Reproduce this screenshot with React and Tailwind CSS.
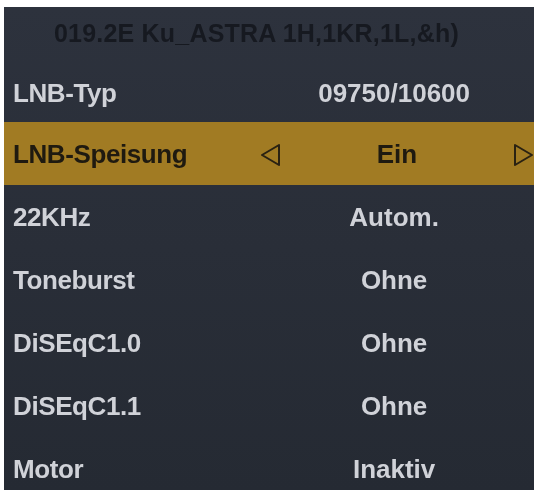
import React from 'react'

const rows = [
  { label: 'LNB-Typ', value: '09750/10600' },
  { label: 'LNB-Speisung', value: 'Ein', active: true },
  { label: '22KHz', value: 'Autom.' },
  { label: 'Toneburst', value: 'Ohne' },
  { label: 'DiSEqC1.0', value: 'Ohne' },
  { label: 'DiSEqC1.1', value: 'Ohne' },
  { label: 'Motor', value: 'Inaktiv' },
]

function Arrow({ dir }) {
  return (
    <svg width="21" height="24" viewBox="0 0 21 24" className="shrink-0">
      {dir === 'left' ? (
        <path d="M19 2 L2 12 L19 22 Z" fill="none" stroke="#2a2212" strokeWidth="2" strokeLinejoin="round" />
      ) : (
        <path d="M2 2 L19 12 L2 22 Z" fill="none" stroke="#2a2212" strokeWidth="2" strokeLinejoin="round" />
      )}
    </svg>
  )
}

export default function App() {
  return (
    <div className="w-[534px] h-[490px] bg-white pt-[7px] pl-[4px] overflow-hidden" style={{ fontFamily: '"Liberation Sans", Arial, sans-serif' }}>
      <div className="h-full bg-gradient-to-b from-[#2d323d] to-[#252a33] overflow-hidden">
        {/* Satellite header */}
        <div className="h-[52px] flex items-center pl-[50px] pt-[2px] text-[25px] font-bold text-[#161920] blur-[0.6px] tracking-[0.2px]">
          019.2E Ku_ASTRA 1H,1KR,1L,&amp;h)
        </div>

        <div className="flex flex-col">
          {rows.map((row, i) => (
            <div
              key={row.label}
              className={`h-[63px] flex items-center pl-[9px] text-[26px] font-bold blur-[0.5px] ${
                row.active ? 'bg-[#a17b23] text-[#1f1a10]' : 'text-[#d0d2d8]'
              } ${i === 0 ? 'pt-[6px]' : 'pt-[2px]'}`}
            >
              <div className="w-[250px] tracking-[-0.4px]">{row.label}</div>
              {row.active ? (
                <div className="flex items-center flex-1">
                  <span className="ml-[9px]"><Arrow dir="left" /></span>
                  <div className="w-[232px] text-center">{row.value}</div>
                  <Arrow dir="right" />
                </div>
              ) : (
                <div className="w-[290px] text-center">{row.value}</div>
              )}
            </div>
          ))}
        </div>
      </div>
    </div>
  )
}
